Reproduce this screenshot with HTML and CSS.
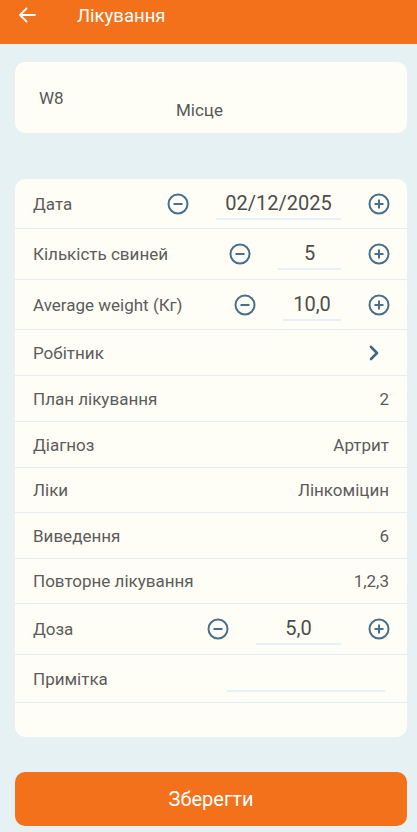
FILE: index.html
```html
<!DOCTYPE html>
<html lang="uk">
<head>
	<meta charset="UTF-8">
	<title>Лікування</title>
	<link rel="stylesheet" href="styles.css">
</head>
<body>
	<div class="top">
		<svg class="back" width="18" height="16" viewBox="0 0 18 16"><path d="M17 8H2M8.5 1.5L2 8l6.5 6.5" fill="none" stroke="#fff" stroke-width="1.8" stroke-linecap="round" stroke-linejoin="round"/></svg>
		<span class="title">Лікування</span>
	</div>
	<div class="page">
		<div class="place">
			<span class="code">W8</span>
			<span class="name">Місце</span>
		</div>
		<div class="form">
			<div class="row h50">
				<span class="label">Дата</span>
				<div class="stepper">
					<svg class="btn" width="22" height="22" viewBox="0 0 22 22"><circle cx="11" cy="11" r="9.5" fill="none" stroke="#48708a" stroke-width="2"/><path d="M6.5 11h9" stroke="#48708a" stroke-width="2"/></svg>
					<span class="val w125">02/12/2025</span>
					<svg class="btn" width="22" height="22" viewBox="0 0 22 22"><circle cx="11" cy="11" r="9.5" fill="none" stroke="#48708a" stroke-width="2"/><path d="M6.5 11h9M11 6.5v9" stroke="#48708a" stroke-width="2"/></svg>
				</div>
			</div>
			<div class="row h51">
				<span class="label">Кількість свиней</span>
				<div class="stepper">
					<svg class="btn" width="22" height="22" viewBox="0 0 22 22"><circle cx="11" cy="11" r="9.5" fill="none" stroke="#48708a" stroke-width="2"/><path d="M6.5 11h9" stroke="#48708a" stroke-width="2"/></svg>
					<span class="val w63">5</span>
					<svg class="btn" width="22" height="22" viewBox="0 0 22 22"><circle cx="11" cy="11" r="9.5" fill="none" stroke="#48708a" stroke-width="2"/><path d="M6.5 11h9M11 6.5v9" stroke="#48708a" stroke-width="2"/></svg>
				</div>
			</div>
			<div class="row h50">
				<span class="label">Average weight (Кг)</span>
				<div class="stepper">
					<svg class="btn" width="22" height="22" viewBox="0 0 22 22"><circle cx="11" cy="11" r="9.5" fill="none" stroke="#48708a" stroke-width="2"/><path d="M6.5 11h9" stroke="#48708a" stroke-width="2"/></svg>
					<span class="val w58">10,0</span>
					<svg class="btn" width="22" height="22" viewBox="0 0 22 22"><circle cx="11" cy="11" r="9.5" fill="none" stroke="#48708a" stroke-width="2"/><path d="M6.5 11h9M11 6.5v9" stroke="#48708a" stroke-width="2"/></svg>
				</div>
			</div>
			<div class="row h46">
				<span class="label">Робітник</span>
				<svg class="arrow" width="12" height="16" viewBox="0 0 12 16"><path d="M3 2l6 6-6 6" fill="none" stroke="#3f6783" stroke-width="2.6" stroke-linecap="round" stroke-linejoin="round"/></svg>
			</div>
			<div class="row h46">
				<span class="label">План лікування</span>
				<span class="text">2</span>
			</div>
			<div class="row h46">
				<span class="label">Діагноз</span>
				<span class="text">Артрит</span>
			</div>
			<div class="row h45">
				<span class="label">Ліки</span>
				<span class="text">Лінкоміцин</span>
			</div>
			<div class="row h46">
				<span class="label">Виведення</span>
				<span class="text">6</span>
			</div>
			<div class="row h45">
				<span class="label">Повторне лікування</span>
				<span class="text">1,2,3</span>
			</div>
			<div class="row h51">
				<span class="label">Доза</span>
				<div class="stepper">
					<svg class="btn" width="22" height="22" viewBox="0 0 22 22"><circle cx="11" cy="11" r="9.5" fill="none" stroke="#48708a" stroke-width="2"/><path d="M6.5 11h9" stroke="#48708a" stroke-width="2"/></svg>
					<span class="val w85">5,0</span>
					<svg class="btn" width="22" height="22" viewBox="0 0 22 22"><circle cx="11" cy="11" r="9.5" fill="none" stroke="#48708a" stroke-width="2"/><path d="M6.5 11h9M11 6.5v9" stroke="#48708a" stroke-width="2"/></svg>
				</div>
			</div>
			<div class="row h48">
				<span class="label">Примітка</span>
				<span class="note"></span>
			</div>
		</div>
		<div class="save">Зберегти</div>
	</div>
</body>
</html>
```

FILE: styles.css
```css
body{margin: 0; background: #e5f1f2; font-family: Roboto, "Noto Sans", sans-serif; color: #555;}
.top{height: 44px; background: #f4711c; display: flex; align-items: center; padding-left: 18px;}
.top .back{margin-top: -14px;}
.top .title{color: #fff; font-size: 18.5px; margin-left: 41px; margin-top: -13px;}
.page{padding: 18px 10px 0 15px;}
.place{height: 71px; background: #fffef6; border-radius: 10px; display: flex; align-items: flex-start; padding: 0 24px; font-size: 17px;}
.place .code{width: 137px; margin-top: 26px; color: #585858;}
.place .name{margin-top: 38px; color: #585858;}
.form{margin-top: 46px; background: #fffef6; border-radius: 10px; padding-bottom: 34px;}
.row{display: flex; align-items: center; justify-content: space-between; padding: 0 18px; border-bottom: 1px solid #e1eff4; box-sizing: border-box;}
.h45{height: 45px;}
.h46{height: 46px;}
.h48{height: 48px;}
.h50{height: 50px;}
.h51{height: 51px;}
.label{font-size: 17px; color: #5c5c5c;}
.text{font-size: 17px; color: #5c5c5c;}
.stepper{display: flex; align-items: center; margin-right: -1px;}
.stepper .btn{display: block;}
.stepper .val{font-size: 20px; color: #4d4d4d; text-align: center; margin: 0 27px 0 27px; border-bottom: 2px solid #e4f1f7; padding: 4px 0 4px; line-height: 22px;}
.w125{width: 125px;}
.w63{width: 63px;}
.w58{width: 58px;}
.w85{width: 85px;}
.arrow{display: block; margin-right: 9px;}
.note{width: 158px; border-bottom: 2px solid #e4f1f7; margin: 24px 4px 0 0;}
.save{margin-top: 35px; height: 54px; border-radius: 10px; background: #f4711c; color: #fff; font-size: 20px; display: flex; align-items: center; justify-content: center;}
```
